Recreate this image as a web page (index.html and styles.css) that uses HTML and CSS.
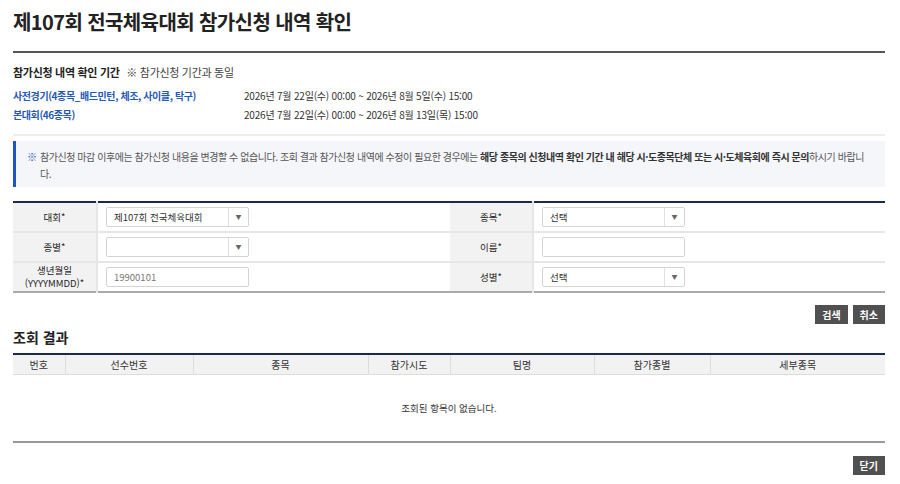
FILE: index.html
```html
<!DOCTYPE html>
<html lang="ko">
<head>
<meta charset="UTF-8" />
<meta name="viewport" content="width=device-width, initial-scale=1" />
<title>참가신청 내역 확인</title>
<link rel="stylesheet" href="styles.css">
</head>
<body>
  <div class="wrap">
    <h1 class="page-title">제107회 전국체육대회 참가신청 내역 확인</h1>

    <div class="period">
      <p class="period-head"><strong>참가신청 내역 확인 기간</strong> <span>※ 참가신청 기간과 동일</span></p>
      <dl class="period-list">
        <div class="period-row">
          <dt>사전경기(4종목_배드민턴, 체조, 사이클, 탁구)</dt>
          <dd>2026년 7월 22일(수) 00:00 ~ 2026년 8월 5일(수) 15:00</dd>
        </div>
        <div class="period-row">
          <dt>본대회(46종목)</dt>
          <dd>2026년 7월 22일(수) 00:00 ~ 2026년 8월 13일(목) 15:00</dd>
        </div>
      </dl>
    </div>

    <div class="notice">
      <span class="notice-mark">※</span>
      <p>참가신청 마감 이후에는 참가신청 내용을 변경할 수 없습니다. 조회 결과 참가신청 내역에 수정이 필요한 경우에는 <b>해당 종목의 신청내역 확인 기간 내 해당 시·도종목단체 또는 시·도체육회에 즉시 문의</b>하시기 바랍니다.</p>
    </div>

    <table class="search-form">
      <colgroup>
        <col class="c-label"><col class="c-field"><col class="c-label2"><col>
      </colgroup>
      <tr>
        <th>대회*</th>
        <td><div class="select"><span>제107회 전국체육대회</span><i>▼</i></div></td>
        <th>종목*</th>
        <td><div class="select"><span>선택</span><i>▼</i></div></td>
      </tr>
      <tr>
        <th>종별*</th>
        <td><div class="select"><span></span><i>▼</i></div></td>
        <th>이름*</th>
        <td><div class="input"></div></td>
      </tr>
      <tr>
        <th>생년월일<br>(YYYYMMDD)*</th>
        <td><div class="input placeholder">19900101</div></td>
        <th>성별*</th>
        <td><div class="select"><span>선택</span><i>▼</i></div></td>
      </tr>
    </table>

    <div class="btn-row">
      <button class="btn">검색</button>
      <button class="btn">취소</button>
    </div>

    <h2 class="section-title">조회 결과</h2>

    <table class="result">
      <colgroup>
        <col style="width:52px"><col style="width:128px"><col style="width:175px"><col style="width:82px">
        <col style="width:144px"><col style="width:116px"><col>
      </colgroup>
      <thead>
        <tr>
          <th>번호</th><th>선수번호</th><th>종목</th><th>참가시도</th><th>팀명</th><th>참가종별</th><th>세부종목</th>
        </tr>
      </thead>
      <tbody>
        <tr><td colspan="7" class="empty">조회된 항목이 없습니다.</td></tr>
      </tbody>
    </table>

    <div class="btn-row bottom">
      <button class="btn">닫기</button>
    </div>
  </div>
</body>
</html>
```

FILE: styles.css
```css
body {
  margin: 0;
  font-family: "Noto Sans CJK KR", "Noto Sans", sans-serif;
  font-size: 10px;
  color: #333;
  background: #fff;
}

.wrap {
  width: 872px;
  margin-left: 13px;
}

.page-title {
  margin: 0;
  padding: 9px 0 16px;
  font-size: 20px;
  line-height: 26px;
  font-weight: 700;
  color: #222;
  letter-spacing: -0.6px;
  border-bottom: 2px solid #555;
}

/* 확인 기간 */
.period {
  padding: 11px 0 10px;
  border-bottom: 2px solid #eee;
}

.period-head {
  margin: 0 0 6px;
  font-size: 11px;
  line-height: 16px;
  letter-spacing: -0.3px;
}

.period-head strong {
  color: #222;
  margin-right: 4px;
}

.period-head span {
  color: #444;
}

.period-list {
  margin: 0;
}

.period-row {
  display: flex;
  line-height: 19px;
  letter-spacing: -0.2px;
}

.period-row dt {
  width: 231px;
  color: #2659b8;
  font-weight: 700;
  letter-spacing: -0.4px;
}

.period-row dd {
  margin: 0;
  color: #333;
}

/* 안내 박스 */
.notice {
  display: flex;
  margin-top: 5px;
  padding: 7px 17px 5px 11px;
  background: #f5f6fa;
  border-left: 3px solid #1f52c4;
  line-height: 17px;
  letter-spacing: -0.45px;
}

.notice-mark {
  color: #1f52c4;
  font-weight: 700;
  width: 13px;
  flex-shrink: 0;
}

.notice p {
  margin: 0;
  color: #555;
}

.notice b {
  color: #333;
}

/* 검색 폼 */
.search-form {
  width: 100%;
  margin-top: 14px;
  border-collapse: collapse;
  border-top: 2px solid #1b2a4e;
  border-bottom: 2px solid #aaa;
  font-size: 9.5px;
}

.search-form .c-label { width: 84px; }
.search-form .c-field { width: 353px; }
.search-form .c-label2 { width: 83px; }

.search-form th {
  padding: 0;
  background: #f2f2f2;
  font-weight: 400;
  color: #222;
  height: 28px;
  line-height: 13px;
  text-align: center;
  border-right: 2px solid #e6e6e6;
}

.search-form tr + tr th,
.search-form tr + tr td {
  border-top: 2px solid #e6e6e6;
}

.search-form td {
  padding: 0 8px;
}

.select, .input {
  display: flex;
  width: 143px;
  height: 20px;
  box-sizing: border-box;
  border: 1px solid #d4d4d4;
  border-radius: 2px;
  background: #fff;
  line-height: 18px;
}

.select span {
  flex: 1;
  padding-left: 7px;
  color: #333;
}

.select i {
  width: 19px;
  border-left: 1px solid #e0e0e0;
  font-style: normal;
  font-size: 6px;
  color: #666;
  text-align: center;
}

.input.placeholder {
  padding-left: 7px;
  color: #777;
}

/* 버튼 */
.btn-row {
  display: flex;
  justify-content: flex-end;
  gap: 5px;
  margin-top: 12px;
}

.btn {
  height: 19px;
  padding: 0 7px;
  border: 0;
  background: #505050;
  color: #fff;
  font-family: inherit;
  font-size: 10px;
  font-weight: 700;
  line-height: 19px;
  cursor: pointer;
}

.btn-row.bottom {
  margin-top: 13px;
}

.section-title {
  margin: 3px 0 0;
  font-size: 14px;
  line-height: 20px;
  font-weight: 700;
  color: #222;
}

/* 결과 목록 */
.result {
  width: 100%;
  margin-top: 6px;
  border-collapse: collapse;
  border-top: 2px solid #1b2a4e;
  border-bottom: 2px solid #999;
  table-layout: fixed;
}

.result th {
  height: 19px;
  padding: 0;
  background: #f2f2f2;
  font-weight: 400;
  color: #333;
  border-left: 1px solid #ddd;
  border-bottom: 1px solid #ddd;
}

.result th:first-child {
  border-left: 0;
}

.result td.empty {
  height: 66px;
  padding: 0;
  text-align: center;
  font-size: 9.5px;
  color: #333;
}
```
